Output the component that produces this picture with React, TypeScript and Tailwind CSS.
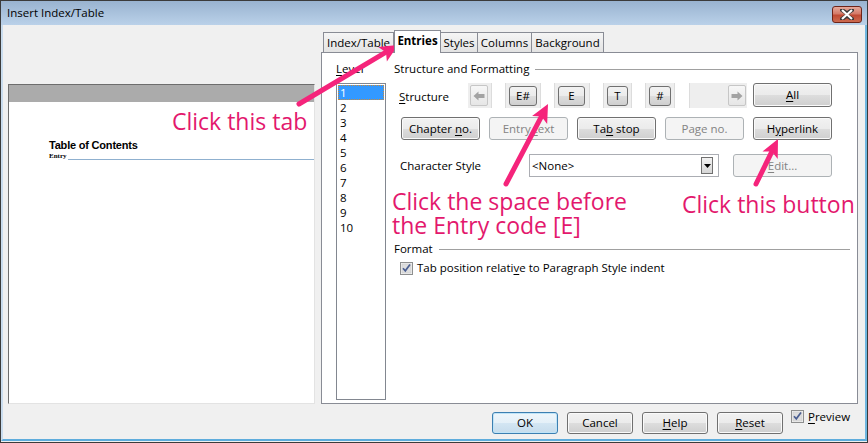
import React from "react";

const UI = "font-['Open_Sans',sans-serif] text-[11.5px] text-black";

function U({ children }: { children: React.ReactNode }) {
  return <span className="underline decoration-[1px] underline-offset-[2px]">{children}</span>;
}

function Btn({
  children,
  disabled,
  focused,
  className = "",
}: {
  children: React.ReactNode;
  disabled?: boolean;
  focused?: boolean;
  className?: string;
}) {
  const base = "flex items-center justify-center rounded-[3px] border leading-none";
  const look = disabled
    ? "border-[#adb2b5] bg-[#f4f4f4] text-[#838383]"
    : focused
    ? "border-[#3c7fb1] bg-[linear-gradient(180deg,#eef6fb_0%,#e4f0f8_50%,#d3e6f3_51%,#c6dcec_100%)] shadow-[inset_0_0_0_1px_#bfe4f8]"
    : "border-[#707070] bg-[linear-gradient(180deg,#f2f2f2_0%,#ebebeb_50%,#dddddd_51%,#cfcfcf_100%)] shadow-[inset_0_0_0_1px_#fafafa]";
  return <div className={`${base} ${look} ${className}`}>{children}</div>;
}

function Check({ className = "" }: { className?: string }) {
  return (
    <svg width="13" height="13" viewBox="0 0 13 13" className={className}>
      <rect x="0.5" y="0.5" width="12" height="12" fill="#f4f4f4" stroke="#8e8f8f" />
      <rect x="2" y="2" width="9" height="9" fill="#dedede" stroke="#c8c8c8" strokeWidth="0.6" />
      <path d="M3 6.2 L5.3 8.8 L10 2.6" fill="none" stroke="#4b5f92" strokeWidth="1.7" />
    </svg>
  );
}

function ArrowBtn({ dir }: { dir: "l" | "r" }) {
  return (
    <div className="flex h-[21px] w-[18px] items-center justify-center rounded-[2px] border border-[#c6c6c6] bg-[linear-gradient(180deg,#f7f7f7,#e6e6e6)]">
      <svg width="12" height="10" viewBox="0 0 12 10">
        {dir === "l" ? (
          <path d="M0.5 5 L5.5 0.5 L5.5 3 L11.5 3 L11.5 7 L5.5 7 L5.5 9.5 Z" fill="#a3a3a3" />
        ) : (
          <path d="M11.5 5 L6.5 0.5 L6.5 3 L0.5 3 L0.5 7 L6.5 7 L6.5 9.5 Z" fill="#a3a3a3" />
        )}
      </svg>
    </div>
  );
}

function WhiteField({ w, ml }: { w: string; ml: string }) {
  return <div className={`h-full bg-white border-x border-[#dcdcdc] ${w} ${ml}`} />;
}

function TokenBtn({ label, w, ml }: { label: string; w: string; ml: string }) {
  return (
    <div
      className={`flex h-[20px] items-center justify-center rounded-[3px] border border-[#707070] bg-[linear-gradient(180deg,#f2f2f2_0%,#ebebeb_50%,#dddddd_51%,#cfcfcf_100%)] ${w} ${ml}`}
    >
      {label}
    </div>
  );
}

function arrowHead(tx: number, ty: number, px: number, py: number, L = 18, W = 17) {
  const dx = px - tx;
  const dy = py - ty;
  const len = Math.hypot(dx, dy);
  const ux = dx / len;
  const uy = dy / len;
  const nx = -uy;
  const ny = ux;
  const bx = px - ux * L;
  const by = py - uy * L;
  const mx = px - ux * (L - 4);
  const my = py - uy * (L - 4);
  return `${px},${py} ${bx + (nx * W) / 2},${by + (ny * W) / 2} ${mx},${my} ${bx - (nx * W) / 2},${by - (ny * W) / 2}`;
}

function Arrow({ t, p }: { t: [number, number]; p: [number, number] }) {
  const dx = p[0] - t[0];
  const dy = p[1] - t[1];
  const len = Math.hypot(dx, dy);
  const ex = p[0] - (dx / len) * 12;
  const ey = p[1] - (dy / len) * 12;
  return (
    <g>
      <line x1={t[0]} y1={t[1]} x2={ex} y2={ey} stroke="#f5247b" strokeWidth="5" strokeLinecap="round" />
      <polygon points={arrowHead(t[0], t[1], p[0], p[1])} fill="#f5247b" />
    </g>
  );
}

export default function App() {
  const levels = ["1", "2", "3", "4", "5", "6", "7", "8", "9", "10"];
  return (
    <div className={`relative h-[443px] w-[868px] overflow-hidden border border-[#3b3b3b] bg-[#f0f0f0] ${UI}`}>
      {/* Title bar */}
      <div className="flex h-[24px] items-center justify-between bg-[linear-gradient(180deg,#99b3d0,#bad1e9)] pl-[6px] pr-[5px]">
        <span className="text-[11.5px] text-black">Insert Index/Table</span>
        <div className="mt-[3px] flex h-[17px] w-[30px] items-center justify-center rounded-[3px] border border-[#6e2418] bg-[linear-gradient(180deg,#e5a99b_0%,#d47a68_45%,#c04a33_55%,#cc6a4f_100%)]">
          <svg width="14" height="11" viewBox="0 0 14 11">
            <path d="M2 1 L7 4.4 L12 1 M2 10 L7 6.6 L12 10" stroke="#3a3a3a" strokeWidth="4" fill="none" strokeLinecap="square" />
            <path d="M2 1 L12 10 M12 1 L2 10" stroke="#ffffff" strokeWidth="2.2" fill="none" />
          </svg>
        </div>
      </div>

      {/* Body */}
      <div className="flex h-[416px] border-x-2 border-b-2 border-l-[#c9dcee] border-r-[#6fb6e0] border-b-[#5eacdc]">
        {/* Preview */}
        <div className="ml-[5px] mt-[59px] flex h-[320px] w-[307px] flex-col border border-l-[#6d6d6d] border-t-[#6d6d6d] border-r-[#e3e3e3] border-b-[#e3e3e3] bg-white">
          <div className="h-[17px] bg-[#ababab]" />
          <div className="mt-[36px] pl-[40px] font-['Liberation_Sans',sans-serif] text-[11px] font-bold leading-[14px] tracking-[-0.2px]">
            Table of Contents
          </div>
          <div className="flex items-end">
            <span className="pl-[40px] font-['Liberation_Serif',serif] text-[7px] font-bold leading-[9px]">Entry</span>
            <div className="mb-[1px] ml-[1px] flex-1 border-t border-[#8fb0cf]" />
          </div>
        </div>

        {/* Right column */}
        <div className="ml-[6px] flex w-[537px] flex-col pt-[5px]">
          {/* Tabs */}
          <div className="flex h-[22px] items-end pl-[2px]">
            <div className="flex h-[20px] w-[71px] items-center justify-center border border-b-0 border-[#898c95] bg-[linear-gradient(180deg,#f5f5f5,#e3e3e3)]">
              Index/Table
            </div>
            <div className="relative z-10 -mb-px flex h-[23px] w-[47px] items-center justify-center border border-b-0 border-[#898c95] bg-white pb-[2px] font-bold">
              Entries
            </div>
            <div className="flex h-[20px] w-[37px] items-center justify-center border border-b-0 border-l-0 border-[#898c95] bg-[linear-gradient(180deg,#f5f5f5,#e3e3e3)]">
              Styles
            </div>
            <div className="flex h-[20px] w-[54px] items-center justify-center border border-b-0 border-l-0 border-[#898c95] bg-[linear-gradient(180deg,#f5f5f5,#e3e3e3)]">
              Columns
            </div>
            <div className="flex h-[20px] w-[72px] items-center justify-center border border-b-0 border-l-0 border-[#898c95] bg-[linear-gradient(180deg,#f5f5f5,#e3e3e3)]">
              Background
            </div>
          </div>

          {/* Panel */}
          <div className="flex h-[352px] border border-[#898c95] bg-white pl-[14px] pt-[8px]">
            {/* Level column */}
            <div className="flex w-[50px] flex-col">
              <div className="h-[16px] leading-[16px]">
                <U>L</U>evel
              </div>
              <div className="mt-[6px] h-[317px] border border-[#828790] px-px pt-px">
                {levels.map((l, i) =>
                  i === 0 ? (
                    <div key={l} className="h-[15px] border border-dotted border-[#c98a3a] bg-[#3399ff] pl-[1px] leading-[13px] text-white">
                      {l}
                    </div>
                  ) : (
                    <div key={l} className="h-[15px] pl-[2px] leading-[15px]">
                      {l}
                    </div>
                  )
                )}
              </div>
            </div>

            {/* Content */}
            <div className="ml-[8px] flex flex-1 flex-col pr-[7px]">
              <div className="flex h-[16px] items-center">
                <span>Structure and Formatting</span>
                <div className="ml-[6px] flex-1 border-t border-[#a0a0a0]" />
              </div>

              {/* Structure row */}
              <div className="mt-[6px] flex h-[25px] items-center">
                <div className="ml-[5px] w-[69px] pt-[3px]">
                  <U>S</U>tructure
                </div>
                <div className="flex h-[25px] w-[279px] items-center bg-[#eeeeee]">
                  <div className="ml-[2px]">
                    <ArrowBtn dir="l" />
                  </div>
                  <WhiteField w="w-[15px]" ml="ml-[3px]" />
                  <TokenBtn label="E#" w="w-[28px]" ml="ml-[3px]" />
                  <WhiteField w="w-[15px]" ml="ml-[3px]" />
                  <TokenBtn label="E" w="w-[27px]" ml="ml-[3px]" />
                  <WhiteField w="w-[15px]" ml="ml-[4px]" />
                  <TokenBtn label="T" w="w-[21px]" ml="ml-[3px]" />
                  <WhiteField w="w-[15px]" ml="ml-[3px]" />
                  <TokenBtn label="#" w="w-[22px]" ml="ml-[3px]" />
                  <WhiteField w="w-[16px]" ml="ml-[3px]" />
                  <div className="ml-auto mr-[1px]">
                    <ArrowBtn dir="r" />
                  </div>
                </div>
                <Btn className="ml-[6px] -mt-[2px] h-[24px] w-[79px]">
                  <U>A</U>ll
                </Btn>
              </div>

              {/* Buttons row */}
              <div className="ml-[7px] mt-[9px] flex h-[23px] gap-[9px]">
                <Btn className="w-[79px]">
                  Chapter&nbsp;<U>n</U>o.
                </Btn>
                <Btn disabled className="w-[79px]">
                  Entry&nbsp;<U>t</U>ext
                </Btn>
                <Btn className="w-[79px]">
                  Ta<U>b</U>&nbsp;stop
                </Btn>
                <Btn disabled className="w-[79px]">
                  Page no.
                </Btn>
                <Btn className="w-[79px]">
                  H<U>y</U>perlink
                </Btn>
              </div>

              {/* Character style row */}
              <div className="mt-[14px] flex h-[23px] items-center">
                <div className="ml-[6px] w-[129px]">Character Style</div>
                <div className="flex h-[23px] w-[190px] items-center border border-[#abadb3] bg-white pl-[2px] pr-[5px]">
                  <span className="flex-1">&lt;None&gt;</span>
                  <div className="flex h-[17px] w-[12px] items-center justify-center border border-[#707070] bg-[linear-gradient(180deg,#f2f2f2,#d6d6d6)]">
                    <svg width="7" height="4" viewBox="0 0 7 4">
                      <path d="M0 0 L7 0 L3.5 4 Z" fill="#000" />
                    </svg>
                  </div>
                </div>
                <Btn disabled className="ml-[14px] h-[23px] w-[99px]">
                  <U>E</U>dit...
                </Btn>
              </div>

              {/* Format */}
              <div className="mt-[64px] flex h-[16px] items-center">
                <span>Format</span>
                <div className="ml-[6px] flex-1 border-t border-[#a0a0a0]" />
              </div>
              <div className="ml-[6px] mt-[3px] flex h-[16px] items-center">
                <Check />
                <span className="ml-[4px]">
                  Tab position relati<U>v</U>e to Paragraph Style indent
                </span>
              </div>
            </div>
          </div>

          {/* Bottom buttons */}
          <div className="flex pl-[171px]">
            <Btn focused className="mt-[8px] h-[22px] w-[66px]">
              OK
            </Btn>
            <Btn className="ml-[9px] mt-[8px] h-[22px] w-[66px]">Cancel</Btn>
            <Btn className="ml-[9px] mt-[8px] h-[22px] w-[66px]">
              <U>H</U>elp
            </Btn>
            <Btn className="ml-[9px] mt-[8px] h-[22px] w-[66px]">
              <U>R</U>eset
            </Btn>
            <div className="ml-[8px] mt-[6px] flex h-[13px] items-center">
              <Check />
              <span className="ml-[4px]">
                <U>P</U>review
              </span>
            </div>
          </div>
        </div>
      </div>

      {/* Annotations */}
      <svg className="pointer-events-none absolute left-0 top-0" width="868" height="443">
        <Arrow t={[298, 103]} p={[397, 44]} />
        <Arrow t={[505, 183]} p={[547, 103]} />
        <Arrow t={[755, 183]} p={[777, 138]} />
      </svg>
      <div className="pointer-events-none absolute left-[171px] top-[107px] whitespace-nowrap font-['Open_Sans',sans-serif] text-[23px] leading-[26px] text-[#e3186d]">
        Click this tab
      </div>
      <div className="pointer-events-none absolute left-[391px] top-[188px] whitespace-nowrap font-['Open_Sans',sans-serif] text-[23px] leading-[24px] text-[#e3186d]">
        Click the space before
        <br />
        the Entry code [E]
      </div>
      <div className="pointer-events-none absolute left-[681px] top-[191px] whitespace-nowrap font-['Open_Sans',sans-serif] text-[23px] leading-[24px] text-[#e3186d]">
        Click this button
      </div>
    </div>
  );
}
